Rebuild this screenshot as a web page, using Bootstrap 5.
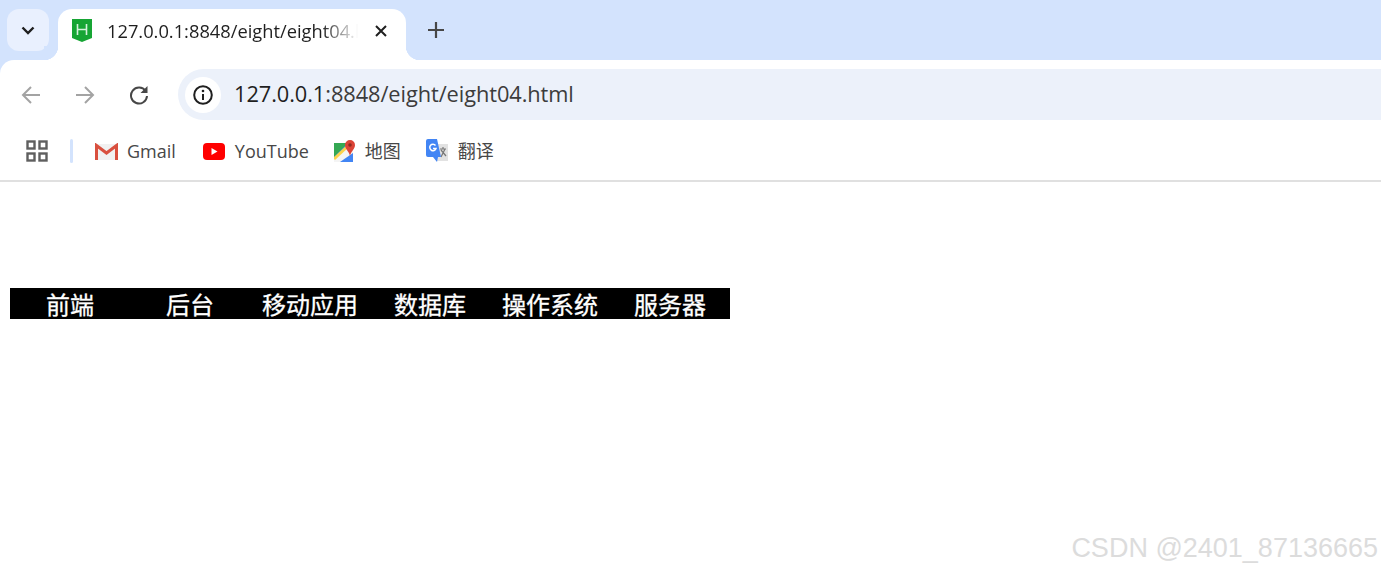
<!DOCTYPE html>
<html lang="zh-CN">
  <head>
    <title>127.0.0.1:8848/eight/eight04.html</title>
    <meta charset="utf-8" />
    <meta name="viewport" content="width=device-width, initial-scale=1" />
    <link
      href="https://cdn.jsdelivr.net/npm/bootstrap@5.3.2/dist/css/bootstrap.min.css"
      rel="stylesheet"
    />
    <script src="https://cdn.jsdelivr.net/npm/bootstrap@5.3.2/dist/js/bootstrap.bundle.min.js"></script>
    <style>
      html, body { height: 571px; overflow: hidden; }
      body { font-family: "Open Sans", "Noto Sans CJK SC", sans-serif; color: #1f1f1f; background: #fff; }

      /* browser tab strip */
      .tab-strip { height: 60px; background: #d3e3fd; padding: 9px 0 0 7px; }
      .tab-search { width: 42px; height: 42px; border-radius: 12px; background: #e9f0fe; }
      .browser-tab { width: 348px; height: 51px; margin-left: 9px; padding: 0 10px 8px 14px; background: #fff; border-radius: 14px 14px 0 0; position: relative; }
      .browser-tab::before, .browser-tab::after { content: ""; position: absolute; bottom: 0; width: 14px; height: 14px; }
      .browser-tab::before { left: -14px; background: radial-gradient(circle at 0 0, #d3e3fd 14px, #fff 14.5px); }
      .browser-tab::after { right: -14px; background: radial-gradient(circle at 100% 0, #d3e3fd 14px, #fff 14.5px); }
      .tab-title { width: 251px; margin-left: 15px; font-size: 18.3px; white-space: nowrap; overflow: hidden; -webkit-mask-image: linear-gradient(to right, #000 215px, transparent 251px); mask-image: linear-gradient(to right, #000 215px, transparent 251px); }
      .tab-add { margin: 0 0 0 22px; padding-top: 13px; line-height: 0; }

      /* toolbar */
      .tool-row { height: 60px; background: #fff; border-radius: 14px 0 0 0; padding: 9px 0 0 14px; position: relative; }
      .strip-under { background: #d3e3fd; }
      .tool-btn { width: 34px; height: 34px; margin-right: 20px; }
      .omni-box { flex: 1; height: 51px; margin-left: 2px; background: #ecf1fa; border-radius: 26px 0 0 26px; padding-left: 7px; }
      .omni-info { width: 36px; height: 36px; border-radius: 50%; background: #fff; }
      .omni-text { margin-left: 13px; font-size: 21.8px; color: #3c3c3c; letter-spacing: -.08px; }
      .omni-host { color: #1f1f1f; }

      /* bookmarks */
      .mark-row { height: 60px; padding: 2px 0 0 26px; font-size: 18px; color: #474747; }
      .mark-apps { margin-right: 22px; }
      .mark-sep { width: 3px; height: 24px; background: #d3e3fd; border-radius: 2px; margin-right: 22px; }
      .mark-link { margin-right: 25px; gap: 10px; }
      .mark-gmail { margin-right: 27px; gap: 9px; }
      .top-line { height: 2px; background: #e0e0e0; }

      /* page content */
      .page-area { position: relative; height: 389px; padding: 106px 0 0 10px; }
      .nav-bar { width: 720px; height: 31px; background: #000; list-style: none; margin: 0; padding: 0; }
      .nav-bar li { width: 120px; text-align: center; color: #fff; font-size: 24px; line-height: 31px; font-family: "Noto Sans CJK SC", sans-serif; -webkit-text-stroke: .3px #fff; }
      .water-mark { position: absolute; right: 3px; bottom: 8px; font-family: "Liberation Sans", sans-serif; font-size: 27px; line-height: 30px; color: #dcdcdc; white-space: nowrap; }
    </style>
  </head>
  <body>
    <div class="tab-strip d-flex align-items-start">
      <div class="tab-search d-flex align-items-center justify-content-center">
        <svg width="14" height="9" viewBox="0 0 14 9"><path d="M1.500 1.500 7 7l5.500-5.500" fill="none" stroke="#1f1f1f" stroke-width="2.400"/></svg>
      </div>
      <div class="browser-tab d-flex align-items-center">
        <svg width="20" height="24" viewBox="0 0 20 24" class="flex-shrink-0">
          <path d="M0 0h20v19l-10 4-10-4z" fill="#16a534"/>
          <path d="M5.500 5v11M14.500 5v11M5.500 10.500h9" fill="none" stroke="#d5f2dc" stroke-width="1.600"/>
        </svg>
        <div class="tab-title">127.0.0.1:8848/eight/eight04.html</div>
        <svg width="14" height="14" viewBox="0 0 14 14" class="ms-auto me-2"><path d="M2 2l10 10M12 2 2 12" stroke="#1f1f1f" stroke-width="2"/></svg>
      </div>
      <div class="tab-add">
        <svg width="16" height="16" viewBox="0 0 16 16"><path d="M8 0v16M0 8h16" stroke="#474747" stroke-width="2.200"/></svg>
      </div>
    </div>

    <div class="strip-under">
      <div class="tool-row d-flex align-items-center">
        <div class="tool-btn d-flex align-items-center justify-content-center">
          <svg width="20" height="20" viewBox="0 0 20 20"><path d="M19 10H2M10 2l-8 8 8 8" fill="none" stroke="#a3a3a3" stroke-width="2"/></svg>
        </div>
        <div class="tool-btn d-flex align-items-center justify-content-center">
          <svg width="20" height="20" viewBox="0 0 20 20"><path d="M1 10h17M10 2l8 8-8 8" fill="none" stroke="#a3a3a3" stroke-width="2"/></svg>
        </div>
        <div class="tool-btn d-flex align-items-center justify-content-center">
          <svg width="20" height="20" viewBox="0 0 20 20"><path d="M16.600 6A8 8 0 1 0 18 11" fill="none" stroke="#474747" stroke-width="2"/><path d="M18.500 1v7h-7z" fill="#474747"/></svg>
        </div>
        <div class="omni-box d-flex align-items-center">
          <div class="omni-info d-flex align-items-center justify-content-center">
            <svg width="20" height="20" viewBox="0 0 20 20"><circle cx="10" cy="10" r="8.800" fill="none" stroke="#1f1f1f" stroke-width="2"/><path d="M10 9v6" stroke="#1f1f1f" stroke-width="2"/><circle cx="10" cy="6" r="1.300" fill="#1f1f1f"/></svg>
          </div>
          <div class="omni-text"><span class="omni-host">127.0.0.1</span>:8848/eight/eight04.html</div>
        </div>
      </div>
    </div>

    <div class="mark-row d-flex align-items-center">
      <svg class="mark-apps" width="22" height="22" viewBox="0 0 22 22"><g fill="none" stroke="#5f5f5f" stroke-width="2.400"><rect x="1.500" y="1.500" width="7" height="7"/><rect x="13.500" y="1.500" width="7" height="7"/><rect x="1.500" y="13.500" width="7" height="7"/><rect x="13.500" y="13.500" width="7" height="7"/></g></svg>
      <div class="mark-sep"></div>
      <div class="mark-link mark-gmail d-flex align-items-center">
        <svg width="23" height="17" viewBox="0 0 23 17">
          <path d="M1 1h21v16H1z" fill="#f1f1f1"/>
          <path d="M1 1 11.500 9 22 1" fill="none" stroke="#dcdcdc" stroke-width="1"/>
          <path d="M1.500 17V2.500L11.500 10 21.500 2.500V17" fill="none" stroke="#d9503f" stroke-width="3"/>
        </svg>
        <span>Gmail</span>
      </div>
      <div class="mark-link d-flex align-items-center">
        <svg width="22" height="17" viewBox="0 0 22 17"><rect width="22" height="17" rx="4" fill="#f00"/><path d="M8.500 5l6 3.500-6 3.500z" fill="#fff"/></svg>
        <span>YouTube</span>
      </div>
      <div class="mark-link d-flex align-items-center">
        <svg width="21" height="22" viewBox="0 0 21 22">
          <path d="M0 3h19v19H0z" fill="#4285f4"/>
          <path d="M0 3h14L0 17z" fill="#34a853"/>
          <path d="M0 19 14 5l5 5v3L6 22H0z" fill="#f4f4f4"/>
          <path d="M0 19 14 6" stroke="#fbd34b" stroke-width="3"/>
          <path d="M16 0a5 5 0 0 1 5 5c0 4-4 6-5 11-1-5-5-7-5-11a5 5 0 0 1 5-5z" fill="#db4437"/>
          <circle cx="16" cy="5" r="1.800" fill="#8e2a20"/>
        </svg>
        <span>地图</span>
      </div>
      <div class="mark-link d-flex align-items-center">
        <svg width="22" height="24" viewBox="0 0 22 24">
          <path d="M10 5h12v17H10z" fill="#e2e2e2"/>
          <path d="M14 10h6M17 8v2M15 18l4-8M15 11l5 6" stroke="#777" stroke-width="1.200" fill="none"/>
          <path d="M2 0h9l4 18-3 0-1 5-4-5H2a2 2 0 0 1-2-2V2a2 2 0 0 1 2-2z" fill="#4285f4"/>
          <path d="M9.500 6.500A3.200 3.200 0 1 0 10 9.500H7" fill="none" stroke="#fff" stroke-width="1.500"/>
        </svg>
        <span>翻译</span>
      </div>
    </div>
    <div class="top-line"></div>

    <div class="page-area">
      <ul class="nav-bar d-flex">
        <li>前端</li>
        <li>后台</li>
        <li>移动应用</li>
        <li>数据库</li>
        <li>操作系统</li>
        <li>服务器</li>
      </ul>
      <div class="water-mark">CSDN @2401_87136665</div>
    </div>
  </body>
</html>
